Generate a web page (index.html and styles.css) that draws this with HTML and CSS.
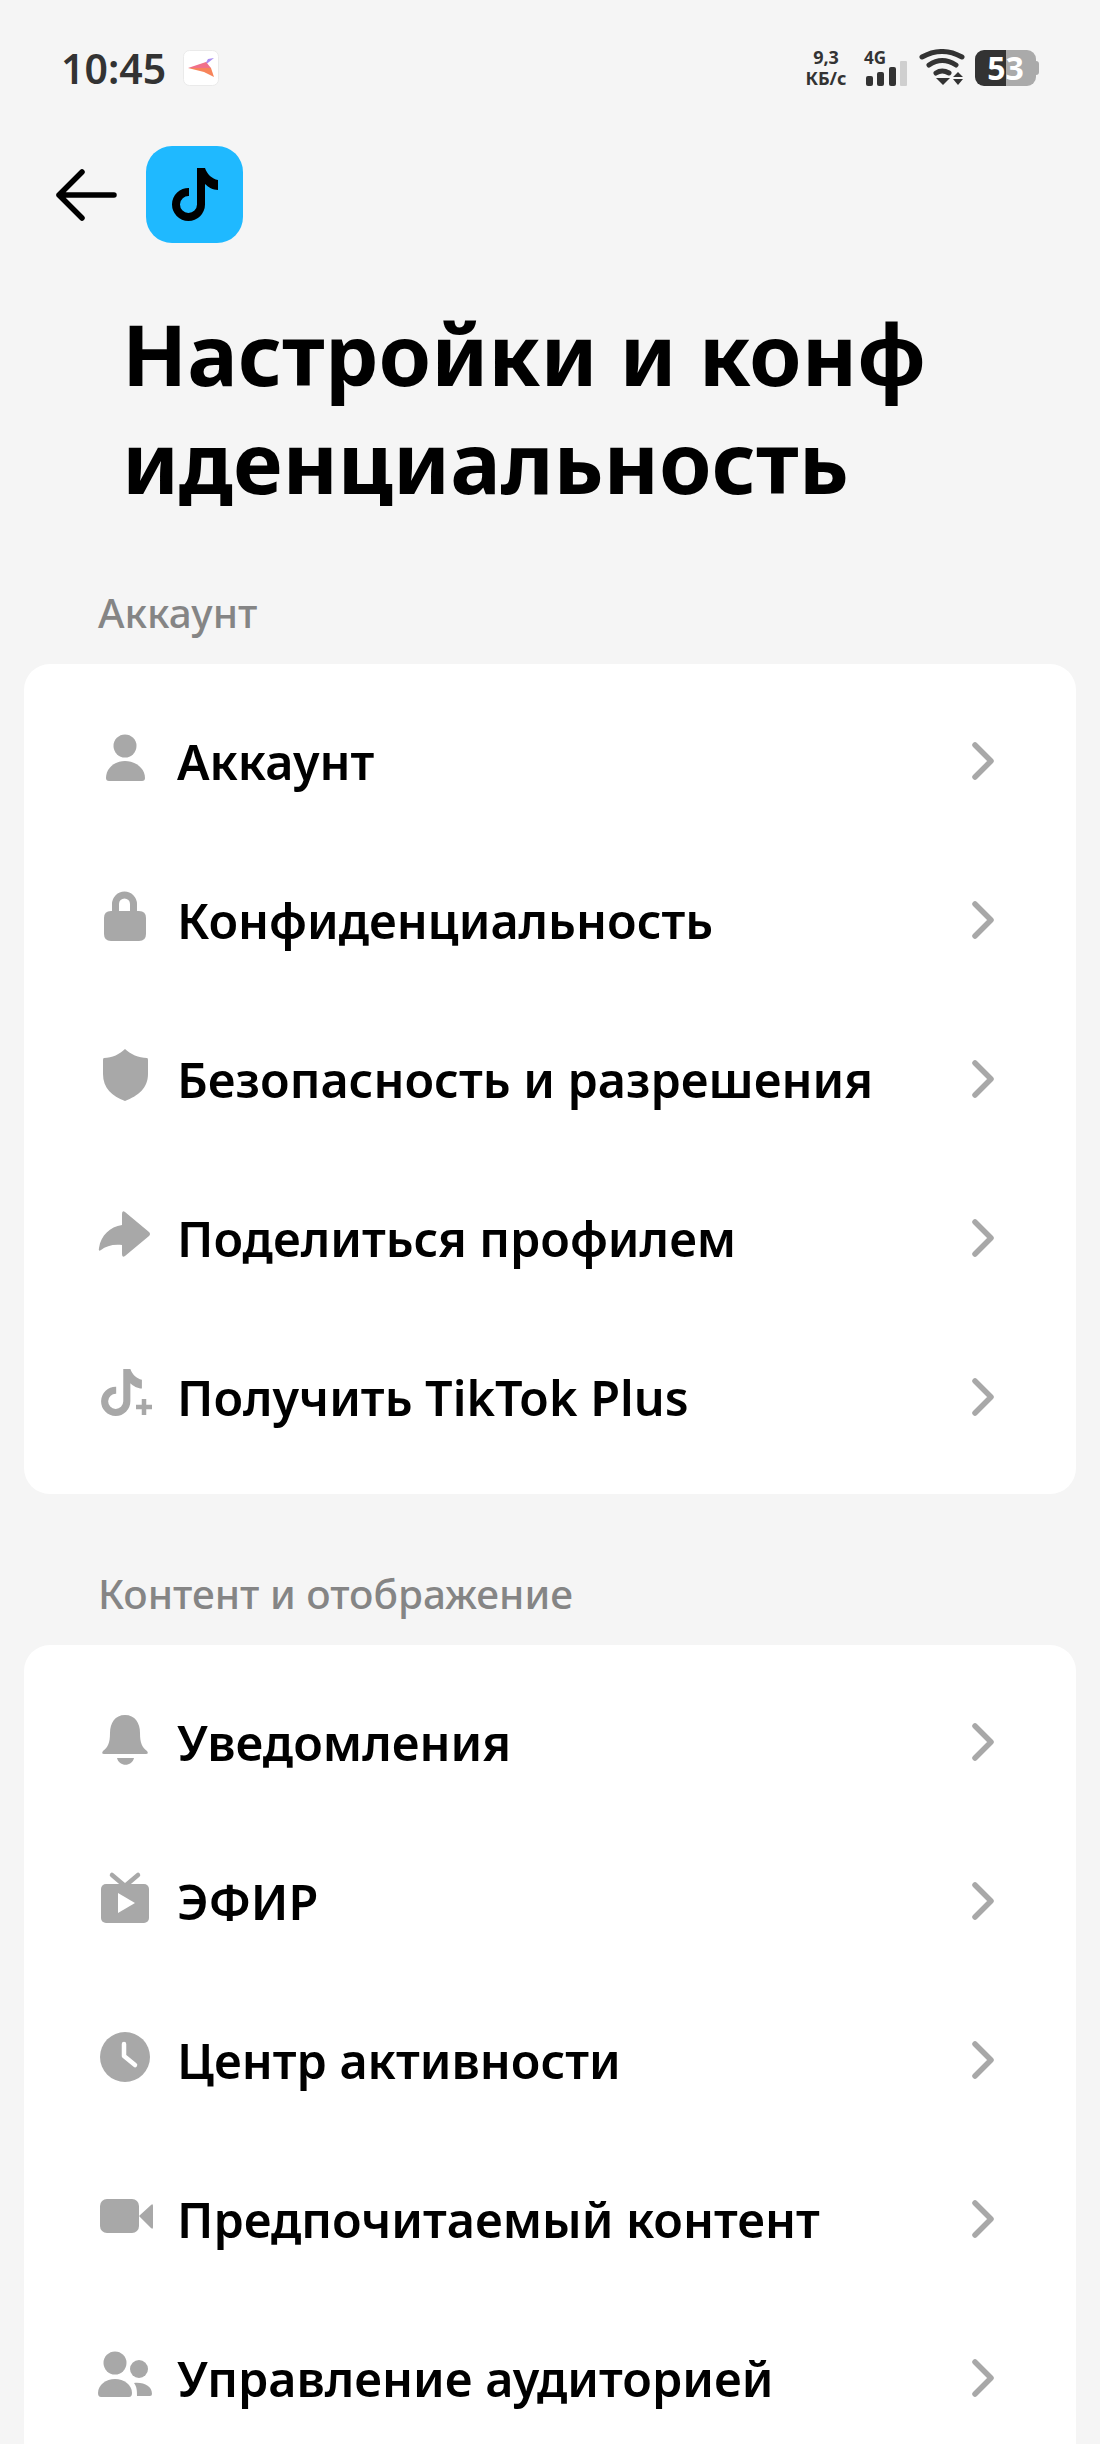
FILE: index.html
```html
<!DOCTYPE html>
<html lang="ru">
<head>
<meta charset="utf-8">
<title>Настройки и конфиденциальность</title>
<link rel="stylesheet" href="styles.css">
</head>
<body>
<svg class="defs" width="0" height="0">
    <symbol id="note" viewBox="0 0 46 53">
        <path d="M25 0H33C35 6 40 11 46 12V22C41 22 36 19 33 16V36.500A16.500 16.500 0 1 1 17 20V28A8.500 8.500 0 1 0 25 36.500Z"/>
    </symbol>
    <symbol id="chevron" viewBox="0 0 22 38">
        <path d="M3 3L19 19L3 35" fill="none" stroke="#a8a8a8" stroke-width="5.500" stroke-linecap="round" stroke-linejoin="round"/>
    </symbol>
</svg>

<div class="status">
    <div class="status-left">
        <span class="clock">10:45</span>
        <svg class="notif" width="36" height="36" viewBox="0 0 36 36">
            <rect x="0.500" y="0.500" width="35" height="35" rx="6" fill="#fff" stroke="#eaeaea"/>
            <path d="M31 8L21 16L25 9Z" fill="#a98cf0"/>
            <path d="M5 18L23 12L28 18Z" fill="#f0708a"/>
            <path d="M5 18L28 18L31 27L21 22Z" fill="#f7845a"/>
        </svg>
    </div>
    <div class="status-right">
        <div class="speed">9,3<br>КБ/с</div>
        <div class="net">
            <span class="net-label">4G</span>
            <svg class="bars" width="42" height="25" viewBox="0 0 42 25">
                <rect x="0" y="15" width="7" height="10" rx="2" fill="#333"/>
                <rect x="11" y="11" width="7" height="14" rx="2" fill="#333"/>
                <rect x="23" y="6" width="7" height="19" rx="2" fill="#333"/>
                <rect x="34" y="0" width="7" height="25" rx="1" fill="#cfcfcf"/>
            </svg>
        </div>
        <svg class="wifi" width="46" height="38" viewBox="0 0 46 38">
            <g fill="none" stroke="#333" stroke-width="5" stroke-linecap="round">
                <path d="M3 8Q23 -3 43 8"/>
                <path d="M10 16Q23 7 37 16"/>
                <path d="M17 24Q23 20 30 24"/>
            </g>
            <path d="M17 29H31L24 36Z" fill="#333"/>
            <path d="M39 23L44 28H34Z M34 30H44L39 36Z" fill="#333"/>
        </svg>
        <div class="battery"><span>53</span></div>
        <div class="battery-cap"></div>
    </div>
</div>

<div class="topbar">
    <svg class="back" width="62" height="52" viewBox="0 0 62 52">
        <path d="M59 26H4M27 3L4 26L27 49" fill="none" stroke="#000" stroke-width="5.500" stroke-linecap="round" stroke-linejoin="round"/>
    </svg>
    <div class="app-icon">
        <svg width="46" height="53"><use href="#note"/></svg>
    </div>
</div>

<h1 class="title">Настройки и конф<br>иденциальность</h1>

<div class="group-label">Аккаунт</div>
<div class="card">
    <div class="row">
        <svg class="icon" viewBox="0 0 66 66"><circle cx="33" cy="18" r="11.500"/><path d="M14 50C14 40 23 33 33 33C43 33 53 40 53 50Q53 53 50 53H17Q14 53 14 50Z"/></svg>
        <span class="row-text">Аккаунт</span>
        <svg class="chevron"><use href="#chevron"/></svg>
    </div>
    <div class="row">
        <svg class="icon" viewBox="0 0 66 66"><path fill-rule="evenodd" d="M20 24V17A12.500 12.500 0 0 1 45 17V24H47Q54 24 54 31V47Q54 54 47 54H19Q12 54 12 47V31Q12 24 19 24ZM27 24H38V17A5.500 5.500 0 0 0 27 17Z"/></svg>
        <span class="row-text">Конфиденциальность</span>
        <svg class="chevron"><use href="#chevron"/></svg>
    </div>
    <div class="row">
        <svg class="icon" viewBox="0 0 66 66"><path d="M33 3C38 8 47 12 55 12Q56 12 56 14V28C56 42 46 50 33 55C20 50 11 42 11 28V14Q11 12 12 12C20 12 28 8 33 3Z"/></svg>
        <span class="row-text">Безопасность и разрешения</span>
        <svg class="chevron"><use href="#chevron"/></svg>
    </div>
    <div class="row">
        <svg class="icon" viewBox="0 0 66 66"><path d="M30 9Q30 5 33 7L57 27Q59 29 57 31L33 51Q30 53 30 49V40C21 39 14 41 9 45Q6 47 7 43C9 30 18 22 30 20Z"/></svg>
        <span class="row-text">Поделиться профилем</span>
        <svg class="chevron"><use href="#chevron"/></svg>
    </div>
    <div class="row">
        <svg class="icon" viewBox="0 0 66 66"><use href="#note" x="9" y="5" width="41" height="47"/><path d="M52 35V51M44 43H60" stroke="#a8a8a8" stroke-width="4.500"/></svg>
        <span class="row-text">Получить TikTok Plus</span>
        <svg class="chevron"><use href="#chevron"/></svg>
    </div>
</div>

<div class="group-label">Контент и отображение</div>
<div class="card">
    <div class="row">
        <svg class="icon" viewBox="0 0 66 66"><path d="M33 6C43 6 48 14 48 24C48 34 50 38 55 42Q57 45 54 45H12Q9 45 11 42C16 38 18 34 18 24C18 14 23 6 33 6Z"/><path d="M25 49H42C40 58 27 58 25 49Z"/></svg>
        <span class="row-text">Уведомления</span>
        <svg class="chevron"><use href="#chevron"/></svg>
    </div>
    <div class="row">
        <svg class="icon" viewBox="0 0 66 66"><path d="M20 7L33 18L46 7" fill="none" stroke="#a8a8a8" stroke-width="4.500" stroke-linecap="round"/><rect x="9" y="16" width="48" height="39" rx="5"/><path d="M26 25L43 35L26 45Z" fill="#fff"/></svg>
        <span class="row-text">ЭФИР</span>
        <svg class="chevron"><use href="#chevron"/></svg>
    </div>
    <div class="row">
        <svg class="icon" viewBox="0 0 66 66"><circle cx="33" cy="30" r="25"/><path d="M32 17V29L43 38" fill="none" stroke="#fff" stroke-width="4.500" stroke-linecap="round" stroke-linejoin="round"/></svg>
        <span class="row-text">Центр активности</span>
        <svg class="chevron"><use href="#chevron"/></svg>
    </div>
    <div class="row">
        <svg class="icon" viewBox="0 0 66 66"><rect x="8" y="13" width="39" height="34" rx="7"/><path d="M47 30L59 19Q61 17 61 20V41Q61 44 59 42Z"/></svg>
        <span class="row-text">Предпочитаемый контент</span>
        <svg class="chevron"><use href="#chevron"/></svg>
    </div>
    <div class="row">
        <svg class="icon" viewBox="0 0 66 66"><circle cx="23" cy="18" r="11.500"/><circle cx="47" cy="24" r="9"/><path d="M6 48C6 40 14 34 23 34C32 34 40 40 40 48Q40 52 37 52H9Q6 52 6 48Z"/><path d="M42 38C52 37 60 41 60 49Q60 51 58 51H45C45 46 45 42 42 38Z"/></svg>
        <span class="row-text">Управление аудиторией</span>
        <svg class="chevron"><use href="#chevron"/></svg>
    </div>
</div>
</body>
</html>
```

FILE: styles.css
```css
html, body {
    margin: 0;
    height: 2444px;
    overflow: hidden;
}

body {
    background: #f5f5f5;
    font-family: "Noto Sans", "Open Sans", sans-serif;
    color: #000;
}

.defs {
    display: block;
    height: 0;
}

.status {
    display: flex;
    justify-content: space-between;
    align-items: center;
    height: 36px;
    padding: 50px 61px 0 61px;
}

.status-left, .status-right {
    display: flex;
    align-items: center;
}

.clock {
    font-size: 41px;
    font-weight: 600;
    color: #333;
    line-height: 36px;
}

.notif {
    margin-left: 17px;
}

.speed {
    width: 46px;
    font-size: 18px;
    font-weight: 700;
    line-height: 21px;
    text-align: center;
    color: #333;
}

.net {
    display: flex;
    flex-direction: column;
    align-items: flex-start;
    width: 44px;
    height: 36px;
    margin-left: 15px;
}

.net-label {
    font-size: 17px;
    font-weight: 700;
    line-height: 15px;
    color: #333;
}

.bars {
    margin-top: -4px;
    margin-left: 2px;
}

.wifi {
    margin-left: 11px;
}

.battery {
    width: 61px;
    height: 36px;
    margin-left: 10px;
    border-radius: 9px;
    background: linear-gradient(to right, #333 31px, #aaa 31px);
    color: #fff;
    font-size: 32px;
    font-weight: 700;
    line-height: 36px;
    text-align: center;
}

.battery-cap {
    width: 3px;
    height: 14px;
    border-radius: 0 3px 3px 0;
    background: #aaa;
}

.topbar {
    display: flex;
    align-items: center;
    margin-top: 60px;
    padding-left: 55px;
}

.app-icon {
    display: flex;
    align-items: center;
    justify-content: center;
    width: 97px;
    height: 97px;
    margin-left: 29px;
    border-radius: 26px;
    background: #1fb9ff;
}

.title {
    margin: 56px 0 0 122px;
    font-size: 84.700px;
    font-weight: 700;
    line-height: 108px;
}

.group-label {
    margin: 71px 0 0 98px;
    font-size: 40.500px;
    font-weight: 500;
    line-height: 54px;
    color: #858585;
}

.card {
    margin: 24px 24px 0;
    padding: 17px 0 18px;
    border-radius: 26px;
    background: #fff;
}

.card + .group-label {
    margin-top: 73px;
}

.row {
    display: flex;
    align-items: center;
    height: 159px;
    padding: 0 82px 0 68px;
}

.icon {
    width: 66px;
    height: 66px;
    fill: #a8a8a8;
}

.row-text {
    flex: 1;
    margin-left: 19px;
    font-size: 48.500px;
    font-weight: 600;
}

.chevron {
    width: 22px;
    height: 38px;
}
```
